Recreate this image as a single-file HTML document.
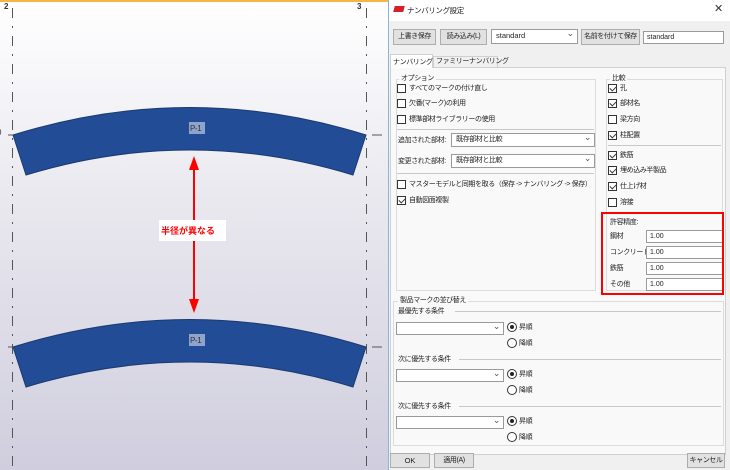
<!DOCTYPE html>
<html><head><meta charset="utf-8"><style>
*{box-sizing:border-box;margin:0;padding:0}
body{width:730px;height:470px;overflow:hidden;position:relative;font-family:"Liberation Sans","Noto Sans CJK JP",sans-serif;font-size:7px;letter-spacing:-0.4px;color:#222;background:#fff}
.a{position:absolute;white-space:nowrap}
.btn{position:absolute;background:#e1e1e1;border:1px solid #adadad;text-align:center;line-height:14px;white-space:nowrap;overflow:hidden}
.inp{position:absolute;background:#fff;border:1px solid #9a9a9a;padding-left:3px;line-height:11px;font-size:7px;letter-spacing:0;white-space:nowrap}
.cmb{position:absolute;background:#fff;border:1px solid #9a9a9a;padding-left:4px;line-height:12px;white-space:nowrap}
.cmb:after{content:"⌄";position:absolute;right:3px;top:-3px;color:#555;font-size:9px}
.cb{position:absolute;width:9px;height:9px;border:1px solid #333;background:#fff}
.cb.c:after{content:"";position:absolute;left:2px;top:0px;width:3px;height:5px;border:solid #333;border-width:0 1px 1px 0;transform:rotate(45deg)}
.rd{position:absolute;width:10px;height:10px;border:1px solid #333;border-radius:50%;background:#fff}
.rd.c:after{content:"";position:absolute;left:2px;top:2px;width:4px;height:4px;border-radius:50%;background:#222}
.ln{position:absolute;height:1px;background:#c8c8c8}
.l{letter-spacing:0;font-size:7.5px}
</style></head><body>
<div class="a" style="left:0;top:0;width:389px;height:470px;background:linear-gradient(#fff 0%,#e8e7ee 45%,#d0cede 100%)"></div>
<div class="a" style="left:0;top:0;width:389px;height:2px;background:#f5b547"></div>
<svg class="a" style="left:0;top:0" width="389" height="470">
<g stroke="#555" stroke-width="1" stroke-dasharray="10,8,2,8" fill="none">
<line x1="12.5" y1="8" x2="12.5" y2="470"/><line x1="366.5" y1="8" x2="366.5" y2="470"/>
<line x1="8" y1="135" x2="389" y2="135"/><line x1="8" y1="347" x2="389" y2="347"/>
</g>
<path d="M13 135 Q190 80 366 135 L353 175 Q190 125 26 175 Z" fill="#224c95" stroke="#1a3a70" stroke-width="1"/>
<path d="M13 347 Q190 292 366 347 L353 387 Q190 337 26 387 Z" fill="#224c95" stroke="#1a3a70" stroke-width="1"/>
<rect x="189" y="122" width="16" height="12" fill="#8fa4cc"/>
<rect x="189" y="334" width="16" height="12" fill="#8fa4cc"/>
<text x="190" y="131" font-size="8" fill="#333" font-family="Liberation Sans">P-1</text>
<text x="190" y="343" font-size="8" fill="#333" font-family="Liberation Sans">P-1</text>
<line x1="194" y1="168" x2="194" y2="302" stroke="red" stroke-width="2"/>
<polygon points="194,156 189,170 199,170" fill="red"/>
<polygon points="194,313 189,299 199,299" fill="red"/>
<rect x="159" y="220" width="67" height="21" fill="#fff"/>
<text x="4" y="9" font-size="8" font-weight="bold" fill="#333">2</text>
<text x="357" y="9" font-size="8" font-weight="bold" fill="#333">3</text>
<text x="-3" y="135" font-size="8" fill="#333">0</text>
</svg>
<div class="a" style="left:161px;top:224px;color:#f00;font-weight:bold;font-size:9px;letter-spacing:0">半径が異なる</div>
<div class="a" style="left:388px;top:0;width:342px;height:470px;background:#f0f0f0;border-left:1px solid #8ab4d8"></div>
<div class="a" style="left:389px;top:0;width:341px;height:21px;background:#fff"></div>
<div class="a" style="left:394px;top:6px;width:10px;height:6px;background:#d4202a;transform:skewX(-15deg)"></div>
<div class="a" style="left:407px;top:5px;font-size:7.5px">ナンバリング設定</div>
<div class="a" style="left:714px;top:2px;font-size:11px;color:#333">✕</div>
<div class="btn" style="left:393px;top:29px;width:43px;height:16px">上書き保存</div>
<div class="btn" style="left:440px;top:29px;width:47px;height:16px">読み込み(L)</div>
<div class="cmb l" style="left:491px;top:29px;width:87px;height:15px">standard</div>
<div class="btn" style="left:581px;top:29px;width:59px;height:16px">名前を付けて保存</div>
<div class="inp" style="left:643px;top:31px;width:81px;height:13px">standard</div>
<div class="a" style="left:390px;top:67px;width:336px;height:388px;border:1px solid #d0d0d0;background:#f9f9f9"></div>
<div class="a" style="left:390px;top:54px;width:43px;height:14px;background:#fff;border:1px solid #d0d0d0;border-bottom:none;padding:2px 2px">ナンバリング</div>
<div class="a" style="left:433px;top:56px;width:65px;height:11px;border:1px solid #d0d0d0;border-bottom:none;padding:0 2px;line-height:10px;background:#f0f0f0">ファミリーナンバリング</div>
<div class="a" style="left:396px;top:79px;width:200px;height:212px;border:1px solid #dcdcdc"></div>
<div class="a" style="left:399px;top:73px;background:#f9f9f9;padding:0 2px">オプション</div>
<div class="cb" style="left:397px;top:84px"></div><div class="a" style="left:409px;top:83px">すべてのマークの付け直し</div>
<div class="cb" style="left:397px;top:99px"></div><div class="a" style="left:409px;top:98px">欠番(マーク)の利用</div>
<div class="cb" style="left:397px;top:115px"></div><div class="a" style="left:409px;top:114px">標準部材ライブラリーの使用</div>
<div class="ln" style="left:397px;top:129px;width:197px"></div>
<div class="a" style="left:398px;top:135px">追加された部材:</div>
<div class="cmb" style="left:451px;top:133px;width:144px;height:14px">既存部材と比較</div>
<div class="a" style="left:398px;top:156px">変更された部材:</div>
<div class="cmb" style="left:451px;top:154px;width:144px;height:14px">既存部材と比較</div>
<div class="ln" style="left:397px;top:173px;width:197px"></div>
<div class="cb" style="left:397px;top:180px"></div><div class="a" style="left:409px;top:179px">マスターモデルと同期を取る（保存 -&gt; ナンバリング -&gt; 保存）</div>
<div class="cb c" style="left:397px;top:196px"></div><div class="a" style="left:409px;top:195px">自動図面複製</div>
<div class="a" style="left:606px;top:79px;width:117px;height:212px;border:1px solid #dcdcdc"></div>
<div class="a" style="left:610px;top:73px;background:#f9f9f9;padding:0 2px">比較</div>
<div class="cb c" style="left:608px;top:84px"></div><div class="a" style="left:620px;top:83px">孔</div>
<div class="cb c" style="left:608px;top:99px"></div><div class="a" style="left:620px;top:98px">部材名</div>
<div class="cb" style="left:608px;top:115px"></div><div class="a" style="left:620px;top:114px">梁方向</div>
<div class="cb c" style="left:608px;top:131px"></div><div class="a" style="left:620px;top:130px">柱配置</div>
<div class="ln" style="left:608px;top:145px;width:113px"></div>
<div class="cb c" style="left:608px;top:151px"></div><div class="a" style="left:620px;top:150px">鉄筋</div>
<div class="cb c" style="left:608px;top:166px"></div><div class="a" style="left:620px;top:165px">埋め込み半製品</div>
<div class="cb c" style="left:608px;top:182px"></div><div class="a" style="left:620px;top:181px">仕上げ材</div>
<div class="cb" style="left:608px;top:198px"></div><div class="a" style="left:620px;top:197px">溶接</div>
<div class="a" style="left:610px;top:217px">許容精度:</div>
<div class="a" style="left:610px;top:231px">鋼材</div><div class="inp" style="left:646px;top:230px;width:77px;height:13px">1.00</div>
<div class="a" style="left:610px;top:247px">コンクリート</div><div class="inp" style="left:646px;top:246px;width:77px;height:13px">1.00</div>
<div class="a" style="left:610px;top:263px">鉄筋</div><div class="inp" style="left:646px;top:262px;width:77px;height:13px">1.00</div>
<div class="a" style="left:610px;top:279px">その他</div><div class="inp" style="left:646px;top:278px;width:77px;height:13px">1.00</div>
<div class="a" style="left:601px;top:212px;width:123px;height:83px;border:2px solid #f00"></div>
<div class="a" style="left:393px;top:301px;width:331px;height:145px;border:1px solid #dcdcdc"></div>
<div class="a" style="left:398px;top:295px;background:#f9f9f9;padding:0 2px">製品マークの並び替え</div>
<div class="a" style="left:398px;top:306px">最優先する条件</div><div class="ln" style="left:455px;top:311px;width:266px"></div>
<div class="cmb" style="left:396px;top:322px;width:108px;height:13px"></div>
<div class="rd c" style="left:507px;top:322px"></div><div class="a" style="left:519px;top:322px">昇順</div>
<div class="rd" style="left:507px;top:338px"></div><div class="a" style="left:519px;top:338px">降順</div>
<div class="a" style="left:398px;top:354px">次に優先する条件</div><div class="ln" style="left:459px;top:359px;width:262px"></div>
<div class="cmb" style="left:396px;top:369px;width:108px;height:13px"></div>
<div class="rd c" style="left:507px;top:369px"></div><div class="a" style="left:519px;top:369px">昇順</div>
<div class="rd" style="left:507px;top:385px"></div><div class="a" style="left:519px;top:385px">降順</div>
<div class="a" style="left:398px;top:401px">次に優先する条件</div><div class="ln" style="left:459px;top:406px;width:262px"></div>
<div class="cmb" style="left:396px;top:416px;width:108px;height:13px"></div>
<div class="rd c" style="left:507px;top:416px"></div><div class="a" style="left:519px;top:416px">昇順</div>
<div class="rd" style="left:507px;top:432px"></div><div class="a" style="left:519px;top:432px">降順</div>
<div class="btn l" style="left:390px;top:453px;width:40px;height:15px">OK</div>
<div class="btn" style="left:434px;top:453px;width:40px;height:15px">適用(A)</div>
<div class="btn" style="left:687px;top:453px;width:38px;height:15px">キャンセル</div>
</body></html>
